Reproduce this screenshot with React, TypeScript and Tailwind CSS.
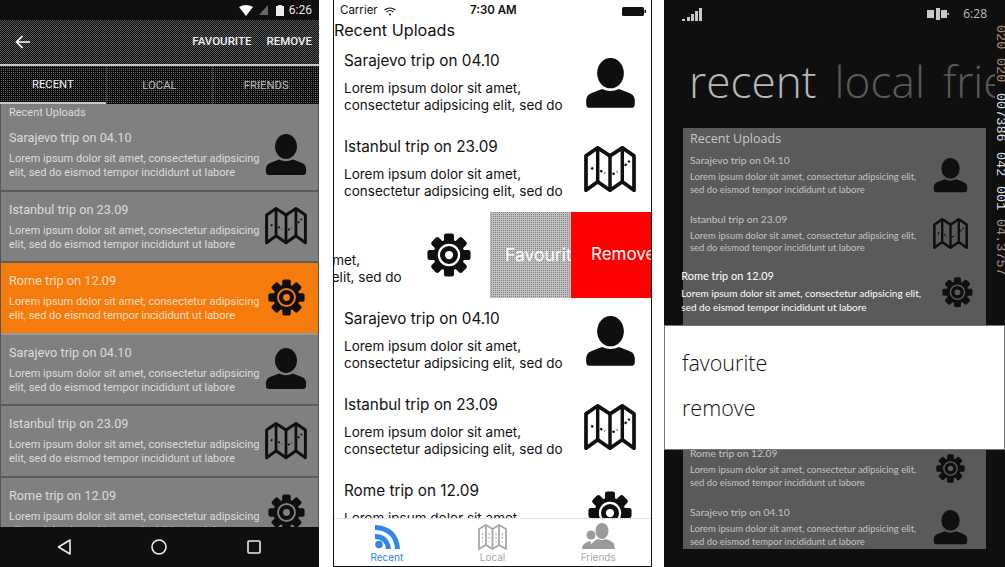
import React from "react";

const LOREM = "Lorem ipsum dolor sit amet, consectetur adipsicing elit, sed do eismod tempor incididunt ut labore";

function Person({ size, className = "" }: { size: number; className?: string }) {
  return (
    <svg width={size} height={size} viewBox="0 0 42 42" className={className} fill="#0f0f0f">
      <ellipse cx="21" cy="12.5" rx="11" ry="12.5" />
      <path d="M1 38 Q0 31 5 29 L14 25.5 Q21 29 28 25.5 L37 29 Q42 31 41 38 Q41 41 38 41 L4 41 Q1 41 1 38 Z" />
    </svg>
  );
}

function MapIcon({ size, className = "" }: { size: number; className?: string }) {
  return (
    <svg width={size} height={size * 0.9} viewBox="0 0 42 38" className={className} fill="none" stroke="#0f0f0f">
      <path d="M1.5 8 L11 1.5 L21 8 L31 1.5 L40.5 8 L40.5 36 L31 29 L21 36 L11 29 L1.5 36 Z" strokeWidth="3" strokeLinejoin="round" />
      <path d="M11 1.5 V29 M21 8 V36 M31 1.5 V29" strokeWidth="2.8" />
      <path d="M6 19 L8 16 M13 20 L17 22 M23 23 L27 21 M33 16 L37 12" strokeWidth="1.8" strokeDasharray="2 2" />
    </svg>
  );
}

function Gear({ size, ring, className = "" }: { size: number; ring: string; className?: string }) {
  return (
    <svg width={size} height={size} viewBox="0 0 48 48" className={className} fill="#0f0f0f">
      <circle cx="24" cy="24" r="17" />
      {[0, 45, 90, 135, 180, 225, 270, 315].map((a) => (
        <rect key={a} x="18.5" y="0.5" width="11" height="12" rx="2.5" transform={`rotate(${a} 24 24)`} />
      ))}
      <circle cx="24" cy="24" r="11" fill="none" stroke={ring} strokeWidth="2.4" />
      <circle cx="24" cy="24" r="4.5" fill={ring} />
    </svg>
  );
}

function AndroidRow({ title, icon, active }: { title: string; icon: React.ReactNode; active?: boolean }) {
  return (
    <div className={`flex h-[71.5px] shrink-0 items-center justify-between border-b-2 pl-2 pr-[11px] ${active ? "border-[#999] bg-[#f57c0c] text-[#f8dcc0]" : "border-[#5c5c5c] text-[#dcdcdc]"}`}>
      <div className="w-[252px] self-start pt-[9px]">
        <div className="text-[12.7px] leading-[18px]">{title}</div>
        <div className="mt-[5px] text-[11px] leading-[14px]">{LOREM}</div>
      </div>
      <div className="flex w-[42px] justify-center">{icon}</div>
    </div>
  );
}

function Android() {
  const back = (
    <svg width="16" height="14" viewBox="0 0 16 14" fill="none" stroke="#fff" strokeWidth="1.7">
      <path d="M15 7 H2 M7.5 1 L1.5 7 L7.5 13" />
    </svg>
  );
  return (
    <div className="flex h-full w-[319px] shrink-0 flex-col font-['Roboto',sans-serif]">
      <div className="flex h-[20px] items-center justify-end bg-[#0f0f0f] pr-[7px] text-[12px] text-[#e8e8e8]">
        <svg width="14" height="11" viewBox="0 0 14 11" fill="#fff" className="mr-[6px]"><path d="M0 2 Q7 -2 14 2 L7 11 Z" /></svg>
        <svg width="9" height="10" viewBox="0 0 9 10" fill="#666" className="mr-[8px]"><path d="M9 0 V10 H0 Z" /></svg>
        <svg width="8" height="11" viewBox="0 0 8 11" fill="#eee" className="mr-[5px]"><path d="M2 0 H6 V1 H8 V11 H0 V1 H2 Z" /></svg>
        <span>6:26</span>
      </div>
      <div className="flex h-[44px] items-center justify-between bg-[repeating-conic-gradient(#0c0c0c_0_25%,#5a5a5a_0_50%)] bg-[length:2px_2px] pl-[15px] pr-[7px] text-[11.5px] font-medium text-[#f2f2f2]">
        {back}
        <div className="flex items-center gap-[15px]">
          <span>FAVOURITE</span>
          <span>REMOVE</span>
        </div>
      </div>
      <div className="h-[2px] bg-[#c8c8c8]" />
      <div className="flex h-[38px] bg-[conic-gradient(#666_25%,#0a0a0a_0)] bg-[length:2px_2px] text-[11.3px]">
        <div className="flex flex-1 items-center justify-center border-b-2 border-[#c8c8c8] pt-[2px] text-[#f2f2f2]">RECENT</div>
        <div className="flex flex-1 items-center justify-center border-l border-[#333] pt-[2px] text-[#bbb]">LOCAL</div>
        <div className="flex flex-1 items-center justify-center border-l border-[#333] pt-[2px] text-[#bbb]">FRIENDS</div>
      </div>
      <div className="flex min-h-0 flex-1 flex-col overflow-hidden border-x border-[#555] bg-[#808080]">
        <div className="mt-[2px] shrink-0 pl-2 text-[11px] leading-[14px] text-[#dcdcdc]">Recent Uploads</div>
        <div className="flex flex-col">
          <AndroidRow title="Sarajevo trip on 04.10" icon={<Person size={42} />} />
          <AndroidRow title="Istanbul trip on 23.09" icon={<MapIcon size={42} />} />
          <AndroidRow active title="Rome trip on 12.09" icon={<Gear size={37} ring="#f57c0c" />} />
          <AndroidRow title="Sarajevo trip on 04.10" icon={<Person size={42} />} />
          <AndroidRow title="Istanbul trip on 23.09" icon={<MapIcon size={42} />} />
          <AndroidRow title="Rome trip on 12.09" icon={<Gear size={37} ring="#808080" />} />
        </div>
      </div>
      <div className="flex h-[40px] shrink-0 items-center bg-[#0f0f0f]">
        <div className="flex flex-1 justify-center pl-[16px]">
          <svg width="14" height="16" viewBox="0 0 14 16" fill="none" stroke="#eee" strokeWidth="1.6"><path d="M13 1 L1.5 8 L13 15 Z" strokeLinejoin="round" /></svg>
        </div>
        <div className="flex flex-1 justify-center">
          <svg width="16" height="16" viewBox="0 0 16 16" fill="none" stroke="#eee" strokeWidth="1.6"><circle cx="8" cy="8" r="7" /></svg>
        </div>
        <div className="flex flex-1 justify-center pr-[18px]">
          <svg width="14" height="14" viewBox="0 0 14 14" fill="none" stroke="#eee" strokeWidth="1.6"><rect x="1" y="1" width="12" height="12" rx="1" /></svg>
        </div>
      </div>
    </div>
  );
}

function IosRow({ title, icon }: { title: string; icon: React.ReactNode }) {
  return (
    <div className="flex h-[86px] w-full shrink-0 items-center pl-[10px]">
      <div className="w-[232px] shrink-0 self-start pt-[12px] text-[#111]">
        <div className="whitespace-nowrap text-[15.3px] leading-[18px]">{title}</div>
        <div className="mt-[10px] w-[225px] text-[13.5px] leading-[17px]">Lorem ipsum dolor sit amet, consectetur adipsicing elit, sed do</div>
      </div>
      <div className="flex w-[68px] justify-center">{icon}</div>
    </div>
  );
}

function Ios() {
  return (
    <div className="ml-[14px] flex h-full w-[319px] shrink-0 flex-col border-x border-b border-[#111] font-['Inter',sans-serif]">
      <div className="relative flex h-[20px] shrink-0 items-center justify-between pl-[6px] pr-[5px] pt-[2px] text-[11.5px] text-[#111]">
        <div className="flex items-center gap-[6px]">
          <span>Carrier</span>
          <svg width="12" height="9" viewBox="0 0 12 9" fill="none" stroke="#111" strokeWidth="1.2"><path d="M0.5 3 Q6 -1 11.5 3 M2.5 5 Q6 2 9.5 5" /><circle cx="6" cy="7.5" r="1" fill="#111" stroke="none" /></svg>
        </div>
        <span className="absolute left-[136px] font-semibold">7:30 AM</span>
        <svg width="24" height="9" viewBox="0 0 24 9" fill="#111"><rect width="22" height="9" rx="1.5" /><rect x="22.5" y="3" width="1.5" height="3" /></svg>
      </div>
      <div className="shrink-0 text-[16.2px] leading-[20px] text-[#111]">Recent Uploads</div>
      <div className="min-h-0 flex-1 overflow-hidden">
        <IosRow title="Sarajevo trip on 04.10" icon={<Person size={51} />} />
        <IosRow title="Istanbul trip on 23.09" icon={<MapIcon size={52} />} />
        <div className="flex h-[86px] overflow-hidden">
          <div className="-ml-[161px] w-[317px] shrink-0">
            <IosRow title="Rome trip on 12.09" icon={<Gear size={44} ring="#fff" />} />
          </div>
          <div className="flex h-full w-[81px] shrink-0 items-center overflow-hidden bg-[conic-gradient(#808080_25%,#c0c0c0_0)] bg-[length:2px_2px] pl-[15px] text-[17.5px] whitespace-nowrap text-white">Favourite</div>
          <div className="flex h-full w-[80px] shrink-0 items-center overflow-hidden bg-[#fe0000] pl-[20px] text-[17px] whitespace-nowrap text-white">Remove</div>
        </div>
        <IosRow title="Sarajevo trip on 04.10" icon={<Person size={51} />} />
        <IosRow title="Istanbul trip on 23.09" icon={<MapIcon size={52} />} />
        <IosRow title="Rome trip on 12.09" icon={<Gear size={44} ring="#fff" />} />
      </div>
      <div className="flex h-[48px] shrink-0 border-t border-dotted border-[#ccc] bg-white text-[10px]">
        <div className="flex flex-1 flex-col items-center justify-end pb-[1px] text-[#2e86e8]">
          <svg width="26" height="24" viewBox="0 0 26 24" fill="#2e86e8">
            <circle cx="5" cy="19.5" r="3.8" />
            <path d="M1 9 Q15 9 17 24 H12 Q11 14 1 14 Z" />
            <path d="M1 0 Q24 1 26 24 H21 Q20 6 1 5 Z" />
          </svg>
          <span className="mt-[1px]">Recent</span>
        </div>
        <div className="flex flex-1 flex-col items-center justify-end pb-[1px] text-[#a8a8a8]">
          <svg width="29" height="26" viewBox="0 0 29 26" fill="none" stroke="#a8a8a8" strokeWidth="1.8">
            <path d="M1 5 L8 1 L14.5 5 L21 1 L28 5 V25 L21 21 L14.5 25 L8 21 L1 25 Z" />
            <path d="M8 1 V21 M14.5 5 V25 M21 1 V21" />
            <path d="M4.5 9 V18 M11 9 V18 M18 9 V18 M24.5 9 V18" strokeWidth="1" strokeDasharray="2 2" />
          </svg>
          <span>Local</span>
        </div>
        <div className="flex flex-1 flex-col items-center justify-end pb-[1px] text-[#a8a8a8]">
          <svg width="33" height="27" viewBox="0 0 33 27" fill="#9a9a9a">
            <circle cx="9" cy="12" r="4.5" />
            <path d="M0 26 Q0 20 8 18 L12 26 Z" />
            <ellipse cx="20" cy="8" rx="6.5" ry="8" />
            <path d="M9 26 Q9 18 16 16 Q20 18 24 16 Q33 18 33 26 Z" />
          </svg>
          <span>Friends</span>
        </div>
      </div>
    </div>
  );
}

function WpRow({ title, icon, active }: { title: string; icon: React.ReactNode; active?: boolean }) {
  return (
    <div className={`flex h-[58.7px] shrink-0 pl-[7px] pr-[18px] font-['Lato',sans-serif] ${active ? "scale-[1.06] text-white" : "text-[#c4c4c4]"}`}>
      <div className="w-[243px] shrink-0 pt-[1px]">
        <div className="whitespace-nowrap text-[10.3px] leading-[18px]">{title}</div>
        <div className="mt-[2px] w-[232px] text-[9.45px] leading-[12.5px]">{LOREM}</div>
      </div>
      <div className="flex h-[50px] flex-1 items-center justify-end">
        <div className="flex w-[35px] justify-center">{icon}</div>
      </div>
    </div>
  );
}

function Wp() {
  return (
    <div className="relative ml-[12px] h-full min-w-0 flex-1 overflow-hidden bg-[#0f0f0f] font-['Open_Sans',sans-serif]">
      <div className="flex h-[27px] items-center justify-between pl-[18px] pr-[18px] pt-[1px] text-[12px] text-[#bdbdbd]">
        <svg width="21" height="15" viewBox="0 0 21 15" fill="#c8c8c8">
          <rect x="0" y="12" width="3" height="2" /><rect x="5" y="10" width="3" height="4" /><rect x="9" y="7" width="3" height="7" /><rect x="13" y="4" width="3" height="10" /><rect x="17" y="1" width="3" height="13" />
        </svg>
        <div className="flex items-center gap-[14px]">
          <svg width="22" height="12" viewBox="0 0 22 12" fill="#c8c8c8"><rect x="0" y="2" width="7" height="8" /><rect x="9" y="0" width="4" height="12" /><rect x="14" y="2" width="6" height="8" /><rect x="20.5" y="5" width="1.5" height="2" /></svg>
          <span>6:28</span>
        </div>
      </div>
      <div className="mr-[10px] flex h-[101px] gap-[18px] overflow-hidden whitespace-nowrap pl-[25px] pt-[22px] text-[44.2px] leading-[64px] font-light">
        <span className="text-[#b8b8b8]">recent</span>
        <span className="text-[#5a5a5a]">local</span>
        <span className="text-[#5a5a5a]">friends</span>
      </div>
      <div className="ml-[19px] h-[421px] w-[303px] bg-[#5a5a5a]">
        <div className="h-[22px] pl-[7px] text-[12.5px] leading-[21px] text-[#c8c8c8]">Recent Uploads</div>
        <WpRow title="Sarajevo trip on 04.10" icon={<Person size={35} />} />
        <WpRow title="Istanbul trip on 23.09" icon={<MapIcon size={35} />} />
        <WpRow active title="Rome trip on 12.09" icon={<Gear size={29} ring="#5a5a5a" />} />
        <WpRow title="Sarajevo trip on 04.10" icon={<Person size={35} />} />
        <WpRow title="Istanbul trip on 23.09" icon={<MapIcon size={35} />} />
        <WpRow title="Rome trip on 12.09" icon={<Gear size={29} ring="#5a5a5a" />} />
        <WpRow title="Sarajevo trip on 04.10" icon={<Person size={35} />} />
      </div>
      <div className="absolute left-0 right-0 top-[325px] h-[125px] border border-[#777] bg-white pl-[17px] pt-[14px] text-[21.5px] leading-[45px] font-light text-[#111]">
        <div>favourite</div>
        <div>remove</div>
      </div>
      <div className="absolute right-[1px] top-[25px] flex flex-row whitespace-pre font-['Liberation_Mono',monospace] text-[13.5px] leading-[8px] text-[#ddd] [writing-mode:vertical-rl]">
        <span className="text-[#b08a70]">020</span>
        <span className="mt-[9px] text-[#b08a70]">020</span>
        <span className="mt-[10px]">007386</span>
        <span className="mt-[11px]">042</span>
        <span className="mt-[9px]">001</span>
        <span className="mt-[9px] text-[#a89080]">04.3757</span>
      </div>
    </div>
  );
}

export default function App() {
  return (
    <div className="flex h-[567px] w-[1005px] overflow-hidden bg-white">
      <Android />
      <Ios />
      <Wp />
    </div>
  );
}
